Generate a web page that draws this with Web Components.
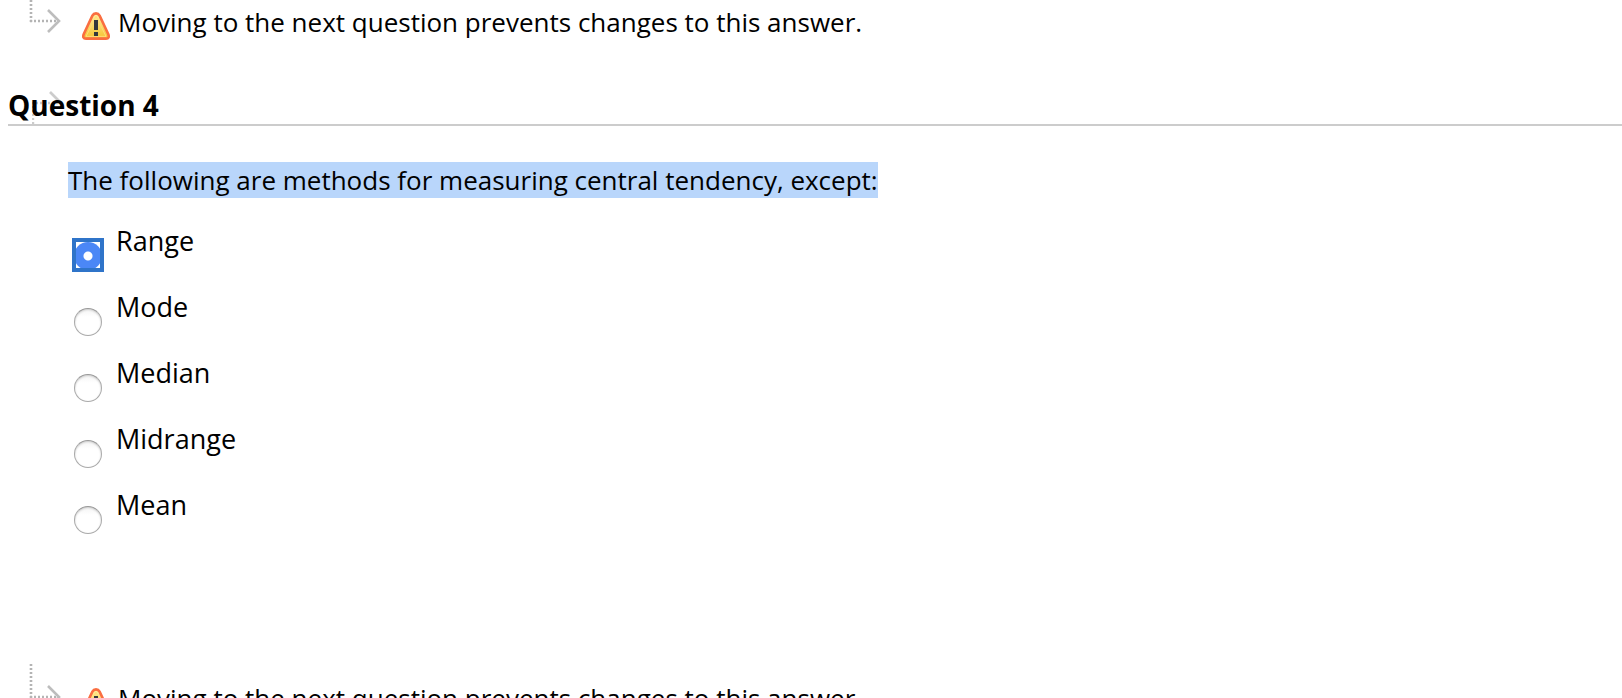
<!DOCTYPE html>
<html lang="en">
<head>
<meta charset="utf-8">
<title>Question 4</title>
<style>
body { margin: 0; background: #fff; color: #000; font: 26px/36px "Open Sans", "Noto Sans", sans-serif; }
</style>
</head>
<body>
<quiz-page>
  <save-notice>Moving to the next question prevents changes to this answer.</save-notice>
  <quiz-question heading="Question 4">
    <mark slot="prompt">The following are methods for measuring central tendency, except:</mark>
    <answer-list options="Range,Mode,Median,Midrange,Mean" selected="Range"></answer-list>
  </quiz-question>
  <save-notice>Moving to the next question prevents changes to this answer.</save-notice>
</quiz-page>

<template id="page">
  <style>
    :host { display: block; height: 100vh; overflow: hidden; }
    main { margin-top: -12px; }
  </style>
  <main><slot></slot></main>
</template>

<template id="notice">
  <style>
    :host { display: flex; align-items: flex-start; height: 56px; padding-left: 28px; }
    svg { display: block; flex: none; }
    .arrow { width: 34px; height: 46px; }
    .warn { width: 28px; height: 28px; margin: 24px 8px 0 20px; }
    p { margin: 16px 0 0; }
  </style>
  <svg class="arrow" viewBox="0 0 34 46" fill="none" aria-hidden="true">
    <path d="M3 0V34M2 33H31" stroke="#b4b4b4" stroke-width="2.6" stroke-dasharray="2 2"/>
    <path d="M20 22L31 33L20 44" stroke="#bdbdbd" stroke-width="2.6"/>
  </svg>
  <svg class="warn" viewBox="0 0 28 28" role="img" aria-label="Warning">
    <defs><linearGradient id="g" x2="0" y2="1"><stop stop-color="#fff0a0"/><stop offset="1" stop-color="#f5c330"/></linearGradient></defs>
    <path d="M14 1.4Q16.4 1.4 17.6 3.6L26.2 22Q28 26.6 24 26.6H4Q0 26.6 1.8 22L10.4 3.6Q11.6 1.4 14 1.4Z" fill="url(#g)" stroke="#fa6e40" stroke-width="2.6"/>
    <path d="M14 4.2L24 24.4H4Z" fill="none" stroke="#ffdc78" stroke-width="1"/>
    <path d="M12 8H16V18H12ZM12 20H16V24H12Z" fill="#34383c"/>
  </svg>
  <p><slot></slot></p>
</template>

<template id="question">
  <style>
    :host { display: block; margin-top: 44px; height: 576px; }
    header { position: relative; margin-left: 8px; border-bottom: 2px solid #ccc; }
    h2 { position: relative; margin: 0; padding-bottom: 2px; font-size: 28px; line-height: 34px; font-weight: 700; }
    svg { position: absolute; left: 24px; bottom: 0; width: 32px; height: 34px; }
    section { padding: 36px 20px 0 68px; }
    ::slotted(mark) { display: inline-block; background: #b9d6fb; color: #000; }
  </style>
  <header>
    <svg viewBox="0 0 32 34" fill="none" aria-hidden="true">
      <path d="M1 34V12M0 13H28" stroke="#ccc" stroke-width="2.4" stroke-dasharray="2 2"/>
      <path d="M18 2L29 13" stroke="#ccc" stroke-width="2.6"/>
    </svg>
    <h2></h2>
  </header>
  <section><slot name="prompt"></slot><slot></slot></section>
</template>

<template id="answers">
  <style>
    :host { display: block; margin-top: 24px; font-size: 27px; }
    fieldset { display: grid; gap: 18px; margin: 0; padding: 0; border: 0; }
    div { display: flex; height: 48px; padding-left: 6px; gap: 14px; }
    label { align-self: flex-start; line-height: 38px; }
    input {
      appearance: none; position: relative; box-sizing: border-box; flex: none;
      width: 28px; height: 28px; margin: 20px 0 0; border: 1px solid #aaa; border-top-color: #999;
      border-radius: 50%; background: linear-gradient(#f4f4f4, #fff 30%);
      box-shadow: inset 0 1px 2px #ccc;
    }
    input:checked { border: 0; background: radial-gradient(circle, #fff 0 4px, #4b87f6 5px); box-shadow: none; }
    input:checked::after { content: ""; position: absolute; inset: -4px -2px -2px; border: 4px solid #2f74c9; }
  </style>
  <fieldset aria-label="Answers"></fieldset>
</template>

<script>
class TemplateElement extends HTMLElement {
  constructor() {
    super();
    this.attachShadow({ mode: "open" }).append(
      document.getElementById(this.constructor.template).content.cloneNode(true));
  }
}
customElements.define("quiz-page", class extends TemplateElement { static template = "page"; });
customElements.define("save-notice", class extends TemplateElement { static template = "notice"; });
customElements.define("quiz-question", class extends TemplateElement {
  static template = "question";
  connectedCallback() { this.shadowRoot.querySelector("h2").textContent = this.getAttribute("heading"); }
});
customElements.define("answer-list", class extends TemplateElement {
  static template = "answers";
  connectedCallback() {
    const list = this.shadowRoot.querySelector("fieldset");
    list.replaceChildren(...this.getAttribute("options").split(",").map((text, i) => {
      const row = document.createElement("div");
      const input = document.createElement("input");
      const label = document.createElement("label");
      input.type = "radio";
      input.name = "answer";
      input.id = label.htmlFor = "answer-" + i;
      input.checked = text === this.getAttribute("selected");
      label.textContent = text;
      row.append(input, label);
      return row;
    }));
  }
});
</script>
</body>
</html>
